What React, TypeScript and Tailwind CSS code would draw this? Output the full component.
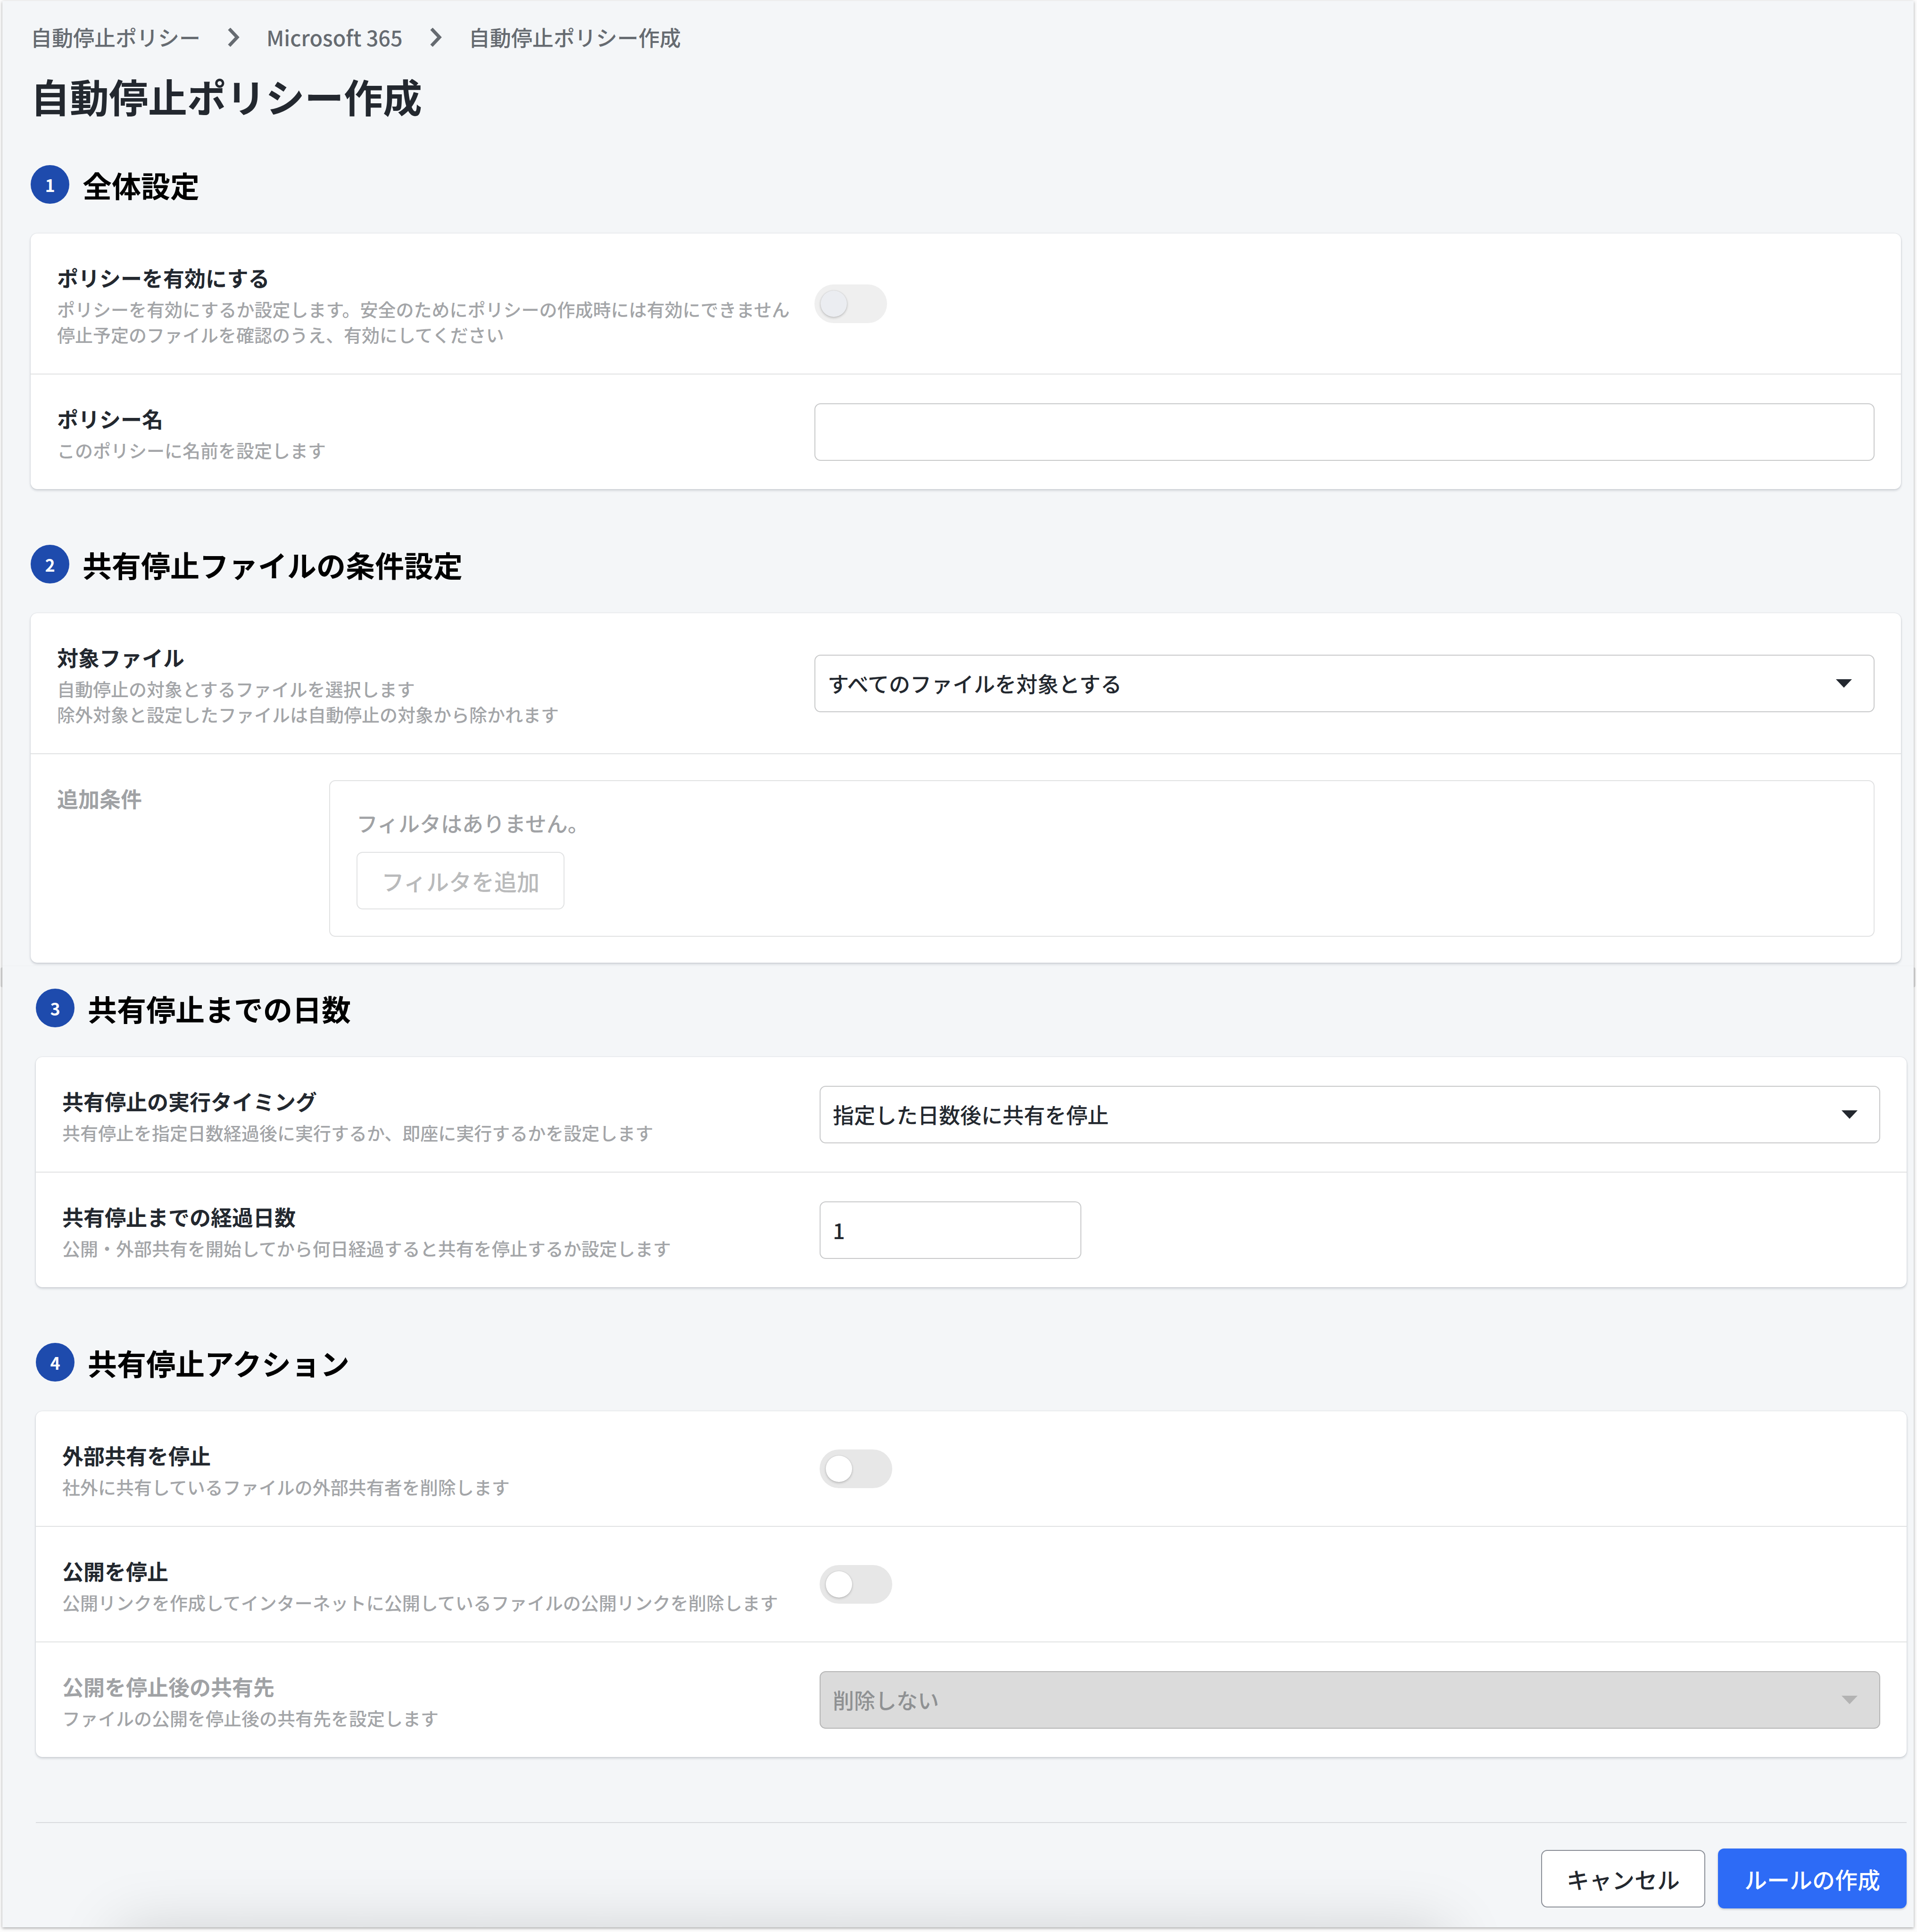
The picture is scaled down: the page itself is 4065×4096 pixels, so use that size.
import { useId, type ReactNode } from "react";

function Badge({ n }: { n: number }) {
  return (
    <span className="flex size-[82px] shrink-0 items-center justify-center rounded-full bg-[#1e4bad] text-[36px] leading-none font-bold text-white">
      {n}
    </span>
  );
}

function Section({ n, title, children }: { n: number; title: string; children: ReactNode }) {
  return (
    <section>
      <div className="flex h-[145px] items-start gap-7">
        <Badge n={n} />
        <h2 className="text-[62px] leading-[84px] font-bold text-black">{title}</h2>
      </div>
      <div className="divide-y-2 divide-[#e1e2e3] rounded-[14px] bg-white shadow-[0_3px_5px_rgba(20,30,50,0.16),0_0_3px_rgba(20,30,50,0.14)]">
        {children}
      </div>
    </section>
  );
}

function Row({
  label,
  lines,
  muted = false,
  children,
}: {
  label: string;
  lines: string[];
  muted?: boolean;
  children: (id: string) => ReactNode;
}) {
  const id = useId();
  return (
    <div className="flex items-center px-14 pt-[55px] pb-[56px]">
      <div className="w-[1606px] shrink-0">
        <label
          htmlFor={id}
          className={`block text-[45px] leading-[78px] font-bold ${muted ? "text-[#a0a2a5]" : "text-[#23282f]"}`}
        >
          {label}
        </label>
        {lines.map((line) => (
          <p key={line} className="text-[38px] leading-[54px] whitespace-nowrap text-[#a3a5a8]">
            {line}
          </p>
        ))}
      </div>
      <div className="-mt-[55px] -mb-[56px] flex min-w-0 grow items-center">{children(id)}</div>
    </div>
  );
}

function Toggle({ id, disabled = false }: { id: string; disabled?: boolean }) {
  return (
    <span className="relative block h-[82px] w-[154px]">
      <input
        id={id}
        type="checkbox"
        role="switch"
        disabled={disabled}
        className="peer block h-full w-full appearance-none rounded-full bg-[#e7e7e7] disabled:bg-[#efefef]"
      />
      <span className="pointer-events-none absolute top-[13px] left-[13px] size-14 rounded-full bg-white shadow-[0_2px_5px_rgba(0,0,0,0.2),0_0_2px_rgba(0,0,0,0.15)] peer-checked:left-[85px] peer-disabled:bg-[#ebedf1]" />
    </span>
  );
}

function Select({ id, value, disabled = false }: { id: string; value: string; disabled?: boolean }) {
  return (
    <span className="relative flex w-full items-center">
      <select
        id={id}
        disabled={disabled}
        className="h-[122px] w-full appearance-none rounded-[13px] border-2 border-[#c8c9ca] bg-white px-[26px] text-[45px] font-medium text-[#23282f] opacity-100 disabled:border-[#b5b5b5] disabled:bg-[#dbdbdb] disabled:text-[#8f9193]"
      >
        <option>{value}</option>
      </select>
      <svg
        viewBox="0 0 34 18"
        aria-hidden="true"
        className={`pointer-events-none absolute right-12 h-[18px] w-[34px] ${disabled ? "text-[#b3b3b3]" : "text-[#23282f]"}`}
      >
        <path d="M0 0H34L17 18Z" fill="currentColor" />
      </svg>
    </span>
  );
}

function Chevron() {
  return (
    <svg viewBox="0 0 26 40" aria-hidden="true" className="h-10 w-[26px] text-[#666b71]">
      <path d="M4 2L21 20L4 38" fill="none" stroke="currentColor" strokeWidth="7" />
    </svg>
  );
}

export default function App() {
  return (
    <div
      className="min-h-screen bg-[#fcfcfc] pt-[2px] pr-[7px] pb-[10px] pl-[5px] font-['Noto_Sans_CJK_JP','Noto_Sans',sans-serif] font-medium"
      lang="ja"
    >
      <main className="relative min-h-[4084px] bg-[#f4f6f8] shadow-[0_2px_6px_rgba(0,0,0,0.35)]">
        <div aria-hidden="true" className="pointer-events-none absolute inset-x-0 bottom-0 h-[200px] overflow-hidden">
          <div className="absolute top-full right-[988px] left-[245px] h-[300px] shadow-[0_0_130px_rgba(0,0,0,0.15)]" />
        </div>

        <div className="relative pr-[27px] pl-[60px]">
          <nav
            aria-label="パンくずリスト"
            className="flex items-center gap-[57px] pt-[44px] text-[45px] leading-[66px] text-[#666b71]"
          >
            <a href="#policies">自動停止ポリシー</a>
            <Chevron />
            <a href="#m365">Microsoft 365</a>
            <Chevron />
            <span>自動停止ポリシー作成</span>
          </nav>
          <h1 className="mt-[31px] text-[83px] leading-[120px] font-bold text-[#23282f]">自動停止ポリシー作成</h1>

          <div className="mt-[87px] flex flex-col gap-[118px]">
            <Section n={1} title="全体設定">
              <Row
                label="ポリシーを有効にする"
                lines={[
                  "ポリシーを有効にするか設定します。安全のためにポリシーの作成時には有効にできません",
                  "停止予定のファイルを確認のうえ、有効にしてください",
                ]}
              >
                {(id) => <Toggle id={id} disabled />}
              </Row>
              <Row label="ポリシー名" lines={["このポリシーに名前を設定します"]}>
                {(id) => (
                  <input
                    id={id}
                    type="text"
                    className="h-[122px] w-full rounded-[13px] border-2 border-[#c8c9ca] bg-white px-[26px] text-[45px] text-[#23282f]"
                  />
                )}
              </Row>
            </Section>

            <Section n={2} title="共有停止ファイルの条件設定">
              <Row
                label="対象ファイル"
                lines={["自動停止の対象とするファイルを選択します", "除外対象と設定したファイルは自動停止の対象から除かれます"]}
              >
                {(id) => <Select id={id} value="すべてのファイルを対象とする" />}
              </Row>
              <div className="flex px-14 py-[55px]">
                <div className="w-[577px] shrink-0 text-[45px] leading-[78px] font-bold text-[#a0a2a5]">追加条件</div>
                <div className="grow rounded-[13px] border-2 border-[#e1e2e3] p-14">
                  <p className="mb-[28px] text-[45px] leading-[66px] text-[#a0a2a5]">フィルタはありません。</p>
                  <button
                    type="button"
                    disabled
                    className="h-[122px] rounded-[13px] border-2 border-[#e1e2e3] bg-white px-[51px] text-[48px] leading-none text-[#b9babb]"
                  >
                    フィルタを追加
                  </button>
                </div>
              </div>
            </Section>
          </div>
        </div>

        <div className="relative mt-[6px] border-t border-[#eef0f2] pt-[48px] pr-[15px] pl-[71px]">
          <div
            aria-hidden="true"
            className="absolute top-[3px] -left-1 h-[42px] w-1 rounded-l bg-linear-to-r from-[#dcdcdc] to-[#b4b4b4]"
          />
          <div
            aria-hidden="true"
            className="absolute top-[3px] -right-1 h-[42px] w-1 rounded-r bg-linear-to-l from-[#dcdcdc] to-[#b4b4b4]"
          />
          <div className="flex flex-col gap-[118px]">
            <Section n={3} title="共有停止までの日数">
              <Row
                label="共有停止の実行タイミング"
                lines={["共有停止を指定日数経過後に実行するか、即座に実行するかを設定します"]}
              >
                {(id) => <Select id={id} value="指定した日数後に共有を停止" />}
              </Row>
              <Row
                label="共有停止までの経過日数"
                lines={["公開・外部共有を開始してから何日経過すると共有を停止するか設定します"]}
              >
                {(id) => (
                  <input
                    id={id}
                    type="text"
                    inputMode="numeric"
                    defaultValue="1"
                    className="h-[122px] w-[555px] rounded-[13px] border-2 border-[#c8c9ca] bg-white px-[26px] text-[45px] text-[#23282f]"
                  />
                )}
              </Row>
            </Section>

            <Section n={4} title="共有停止アクション">
              <Row label="外部共有を停止" lines={["社外に共有しているファイルの外部共有者を削除します"]}>
                {(id) => <Toggle id={id} />}
              </Row>
              <Row
                label="公開を停止"
                lines={["公開リンクを作成してインターネットに公開しているファイルの公開リンクを削除します"]}
              >
                {(id) => <Toggle id={id} />}
              </Row>
              <Row label="公開を停止後の共有先" lines={["ファイルの公開を停止後の共有先を設定します"]} muted>
                {(id) => <Select id={id} value="削除しない" disabled />}
              </Row>
            </Section>
          </div>

          <footer className="mt-[138px] flex items-center justify-end gap-[27px] border-t-2 border-[#d9dbde] pt-[54px]">
            <button
              type="button"
              className="h-[122px] rounded-[13px] border-2 border-[#8a8e96] bg-white px-[52px] text-[48px] leading-none text-[#23282f]"
            >
              キャンセル
            </button>
            <button
              type="button"
              className="h-[127px] rounded-[13px] bg-[#2d6bf6] px-14 text-[48px] leading-none text-white shadow-[0_2px_4px_rgba(0,0,0,0.2)]"
            >
              ルールの作成
            </button>
          </footer>
        </div>
      </main>
    </div>
  );
}
